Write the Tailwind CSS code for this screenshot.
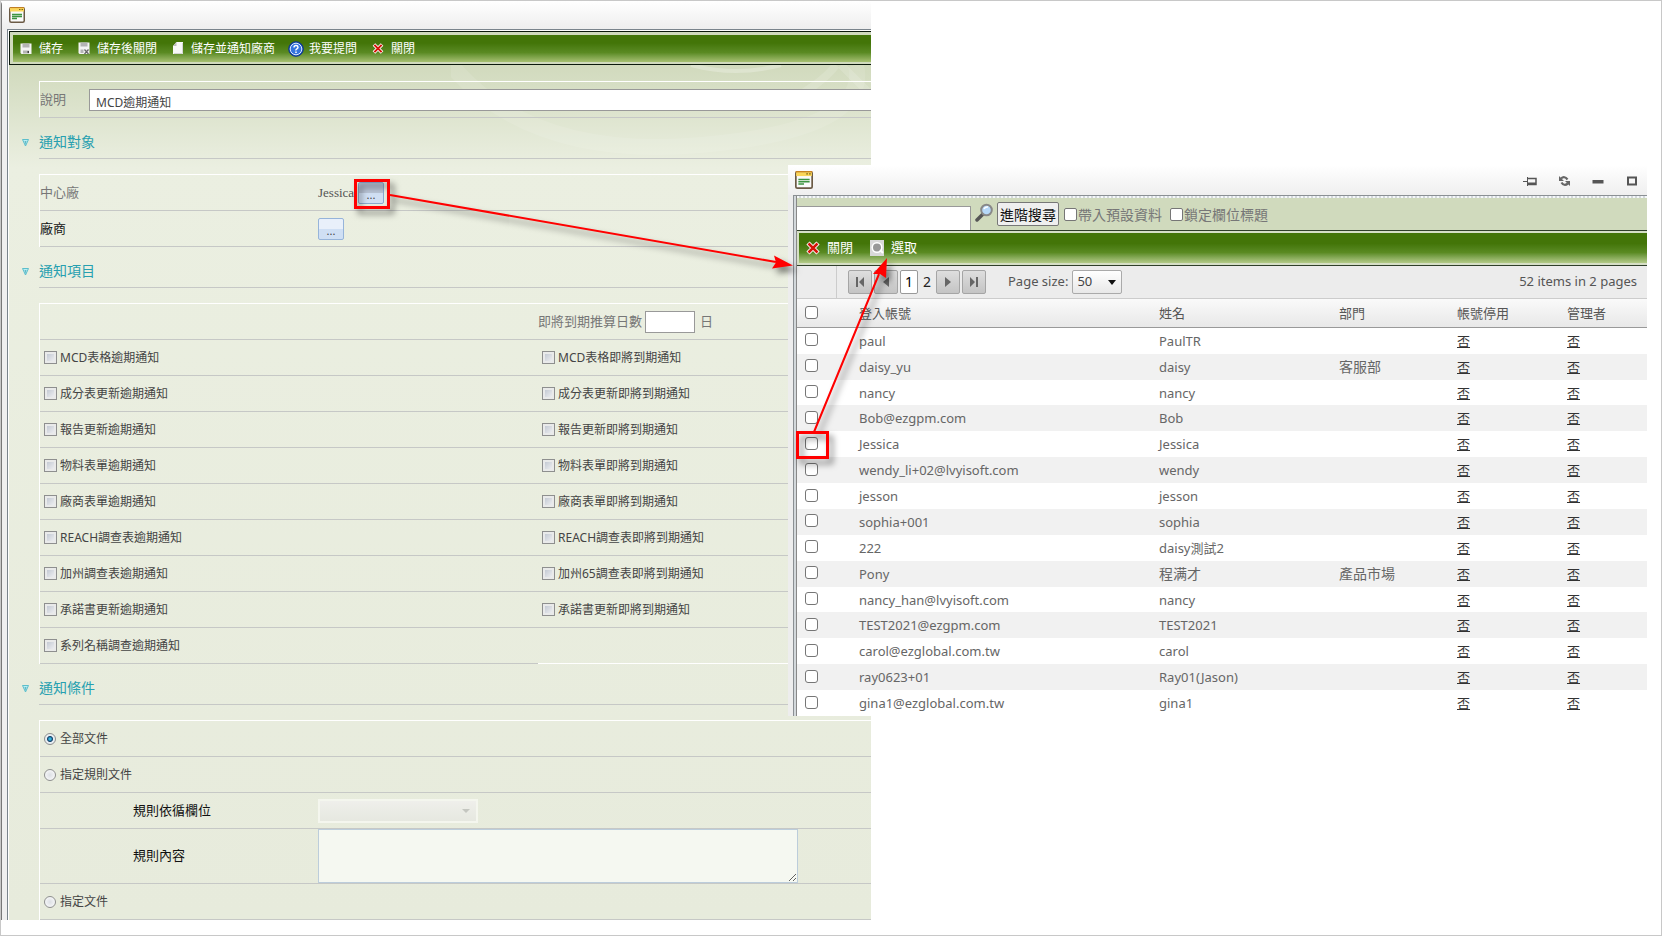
<!DOCTYPE html>
<html lang="zh-Hant">
<head>
<meta charset="utf-8">
<title>MCD逾期通知</title>
<script src="https://cdn.jsdelivr.net/npm/@tailwindcss/browser@4"></script>
</head>
<body class="bg-white">
<svg class="hidden">
  <symbol id="form" viewBox="0 0 16 16">
    <rect x=".75" y=".75" width="14.5" height="14.5" rx="1.5" fill="#fafafa" stroke="#6b5a45" stroke-width="1.5"/>
    <path d="M1 1h14v3.500H1z" fill="#fbd65a"/><path d="M.7 1.200Q.8.6 1.500.6h13q.7 0 .8.600" fill="none" stroke="#c98320"/>
    <path d="M10 2.500h1.500M12.500 2.500H14" stroke="#7d6a18"/>
    <path d="M3 7.500h10M3 9.500h10M3 11.500h5" stroke="#3d9440" stroke-width="1.300"/>
  </symbol>
  <symbol id="cross" viewBox="0 0 16 16">
    <path d="M3 3l10 10M13 3L3 13" stroke="#fff" stroke-width="4.500"/>
    <path d="M3.500 3.500l9 9M12.500 3.500l-9 9" stroke="#d41408" stroke-width="2.500"/>
  </symbol>
  <symbol id="gem" viewBox="0 0 9 9">
    <path d="M1.500 1.500h6L4.500 8z" fill="#b9eef3" stroke="#5cbecb"/><path d="M3.500 3h2L4.500 7z" fill="#2c96a8" opacity=".6"/>
  </symbol>
</svg>
<main class="relative min-h-screen overflow-hidden border border-[#c8c8c8] font-['Noto_Sans','Noto_Sans_CJK_TC',sans-serif]">

  <!-- Notification settings window -->
  <section class="flex w-[52.42%] flex-col rounded-tl border-l border-[#777] bg-[#efefef]">
    <header class="flex h-7 items-center bg-linear-to-b from-white to-[#eeeeee] pl-[7px]">
      <svg class="size-4"><use href="#form"/></svg>
    </header>
    <div class="ml-[5px] border-t border-l border-[#7a848c] bg-white pt-px pl-px">
      <nav class="border-y border-l border-[#0c1a0c] bg-[#d0dabd] pt-[3px] pb-0.5 pl-[3px]">
        <div class="flex h-[27px] items-center gap-[13px] bg-linear-to-b from-[#437508] from-30% via-[#5a8a22] via-65% to-[#a6c070] pl-[5px] text-xs text-white [&_button]:flex [&_button]:items-center [&_button]:gap-[5px] [&_svg]:size-4">
          <button type="button"><svg viewBox="0 0 16 16"><path d="M2.500 2.500h11v10.500H3.500l-1-1z" fill="#f4f4f4"/><path d="M4.500 2.500h7v4h-7zM5 9.500h6v3H5z" fill="#b4b4b4"/><path d="M9.500 10h1.500v2H9.500z" fill="#444"/></svg>儲存</button>
          <button type="button"><svg viewBox="0 0 16 16"><path d="M2.500 1.500h11V13H3.500l-1-1z" fill="#f4f4f4"/><path d="M4.500 1.500h7v4h-7zM4.500 8.500h3V12h-3z" fill="#b4b4b4"/><path d="M8.500 8.500l4 4.500M12.500 8.500l-4 4.500" stroke="#666" stroke-width="1.300"/></svg>儲存後關閉</button>
          <button type="button"><svg viewBox="0 0 16 16"><path d="M6.500 1H13v12H3V5z" fill="#f8f8f8"/><path d="M6.500 1v4H3z" fill="#bdbdbd"/><path d="M12.500 2v10.500H4" fill="none" stroke="#d5d5d5"/></svg>儲存並通知廠商</button>
          <button type="button"><svg viewBox="0 0 16 16"><circle cx="8" cy="8" r="7.300" fill="#1e55c4" stroke="#0e3585"/><circle cx="8" cy="8" r="5.800" fill="#3474df" stroke="#dfe9fb"/><path d="M6 6.500q.1-1.900 2-1.900t2 1.700q0 1-1.100 1.600T8 9.500M8 10.500v1.500" fill="none" stroke="#fff" stroke-width="1.500"/></svg>我要提問</button>
          <button type="button"><svg class="p-px pb-0.5"><use href="#cross"/></svg>關閉</button>
        </div>
      </nav>
      <form class="relative bg-linear-to-b from-[#d1dabd] via-[#ebefe1] via-12% to-[#e7ebdc] pt-4 text-xs text-[#444]">
        <svg class="absolute top-0 right-0 h-[95px] w-[420px]" viewBox="0 0 420 95" fill="none" stroke="#fff">
          <path d="M0 0Q80 95 250 80T405 0" stroke-width="16" opacity=".1"/><path d="M240 0q45 12 90 0" stroke-width="4" opacity=".25"/><path d="M330 40Q370 20 385 0M390 0l30 30" stroke-width="8" opacity=".14"/>
        </svg>
        <div class="relative ml-[30px]">
          <div class="flex h-[37px] items-center border-t border-b border-l border-t-white border-b-[#c6c8c6] border-l-white">
            <label for="memo" class="w-[49px] text-[13px] text-[#777]">說明</label>
            <input id="memo" value="MCD逾期通知" class="h-[22px] min-w-0 flex-1 border-y border-l border-[#999] bg-white px-1.5 pt-1">
          </div>

          <div class="flex h-[41px] items-center border-b border-[#c6c8c6] pt-2">
            <svg class="-ml-[18px] mr-[9px] size-[9px]"><use href="#gem"/></svg>
            <h2 class="text-sm text-[#27a0b0]">通知對象</h2>
          </div>
          <div class="mt-[15px] border-t border-l border-white text-[13px]">
            <div class="flex h-9 items-center border-b border-[#c6c8c6] text-[#777]">
              <span class="w-[278px]">中心廠</span><span class="w-10 font-['Liberation_Serif',serif] text-[#555]">Jessica</span>
              <button type="button" aria-label="選擇中心廠" class="h-[22px] w-[26px] rounded-xs border border-[#8ba9cf] bg-linear-to-b from-[#b9c4d6] from-50% to-[#d0dff3] to-50% pt-1 text-[11px] leading-4 text-[#444]">...</button>
            </div>
            <div class="flex h-9 items-center border-b border-[#c6c8c6] text-[#111]">
              <span class="w-[278px]">廠商</span>
              <button type="button" aria-label="選擇廠商" class="h-[22px] w-[26px] rounded-xs border border-[#96b4da] bg-linear-to-b from-[#e9f0fa] from-50% to-[#cfdff4] to-50% pt-1 text-[11px] leading-4 text-[#444]">...</button>
            </div>
          </div>

          <div class="flex h-[41px] items-center border-b border-[#c6c8c6] pt-2">
            <svg class="-ml-[18px] mr-[9px] size-[9px]"><use href="#gem"/></svg>
            <h2 class="text-sm text-[#27a0b0]">通知項目</h2>
          </div>
          <div class="mt-[15px] border-t border-l border-white [&_div]:flex [&_div]:h-9 [&_div]:items-center [&_div]:border-b [&_div]:border-[#c6c8c6] [&_input[type=checkbox]]:size-[13px] [&_input[type=checkbox]]:appearance-none [&_input[type=checkbox]]:border [&_input[type=checkbox]]:border-[#8e8f8f] [&_input[type=checkbox]]:bg-linear-to-br [&_input[type=checkbox]]:from-[#b9c0cc] [&_input[type=checkbox]]:to-[#f8f8f8] [&_input[type=checkbox]]:shadow-[inset_0_0_0_2px_#e9eaea] [&_label]:flex [&_label]:w-[498px] [&_label]:shrink-0 [&_label]:items-center [&_label]:gap-[3px] [&_label]:pl-1">
            <div class="text-[13px] text-[#777]">
              <span class="w-[498px] shrink-0"></span><label for="days" class="w-auto! pl-0!">即將到期推算日數</label>
              <input id="days" class="mr-[5px] ml-[3px] h-[22px] w-[50px] border border-[#999] bg-white"><span>日</span>
            </div>
            <div><label><input type="checkbox">MCD表格逾期通知</label><label><input type="checkbox">MCD表格即將到期通知</label></div>
            <div><label><input type="checkbox">成分表更新逾期通知</label><label><input type="checkbox">成分表更新即將到期通知</label></div>
            <div><label><input type="checkbox">報告更新逾期通知</label><label><input type="checkbox">報告更新即將到期通知</label></div>
            <div><label><input type="checkbox">物料表單逾期通知</label><label><input type="checkbox">物料表單即將到期通知</label></div>
            <div><label><input type="checkbox">廠商表單逾期通知</label><label><input type="checkbox">廠商表單即將到期通知</label></div>
            <div><label><input type="checkbox">REACH調查表逾期通知</label><label><input type="checkbox">REACH調查表即將到期通知</label></div>
            <div><label><input type="checkbox">加州調查表逾期通知</label><label><input type="checkbox">加州65調查表即將到期通知</label></div>
            <div><label><input type="checkbox">承諾書更新逾期通知</label><label><input type="checkbox">承諾書更新即將到期通知</label></div>
            <div class="border-b-0!"><label class="h-9 border-b border-[#c6c8c6]"><input type="checkbox">系列名稱調查逾期通知</label><span class="h-9 flex-1 border-b border-white"></span></div>
          </div>

          <div class="flex h-[41px] items-center border-b border-[#c6c8c6] pt-2">
            <svg class="-ml-[18px] mr-[9px] size-[9px]"><use href="#gem"/></svg>
            <h2 class="text-sm text-[#27a0b0]">通知條件</h2>
          </div>
          <div class="mt-[15px] border-t border-l border-white [&_input]:size-3 [&_input]:appearance-none [&_input]:rounded-full [&_input]:border [&_input]:border-[#8e8f8f] [&_input]:bg-radial [&_input]:from-[#dcdfe4] [&_input]:to-white [&_input:checked]:from-[#35b5e0] [&_input:checked]:from-15% [&_input:checked]:via-[#123f66] [&_input:checked]:via-35% [&_input:checked]:to-[#e8eef2] [&_input:checked]:to-50% [&>div]:flex [&>div]:items-center [&>div]:border-b [&>div]:border-[#c6c8c6]">
            <div class="h-9"><label class="flex items-center gap-1 pl-1"><input type="radio" name="scope" checked>全部文件</label></div>
            <div class="h-9"><label class="flex items-center gap-1 pl-1"><input type="radio" name="scope">指定規則文件</label></div>
            <div class="h-9 text-[13px] text-[#111]">
              <label for="field" class="w-[278px] pl-[93px]">規則依循欄位</label>
              <div class="relative flex items-center">
                <select id="field" disabled class="h-6 w-40 appearance-none border-2 border-[#f4f6ee] bg-linear-to-b from-[#efefeb] to-[#e6e8e0]"><option></option></select>
                <svg class="absolute right-2 size-2" viewBox="0 0 8 8"><path d="M0 2h8L4 6z" fill="#c4c6c0"/></svg>
              </div>
            </div>
            <div class="h-[55px] text-[13px] text-[#111]">
              <label for="rule" class="w-[278px] pl-[93px]">規則內容</label>
              <textarea id="rule" class="h-[54px] w-[480px] border border-[#bccddb] bg-[#f5f8f1]"></textarea>
            </div>
            <div class="h-9"><label class="flex items-center gap-1 pl-1"><input type="radio" name="scope">指定文件</label></div>
          </div>
        </div>
      </form>
    </div>
  </section>

  <!-- Account picker window -->
  <section class="absolute top-[164px] right-[14px] left-[787px] bg-[#ededed]">
    <header class="flex h-[30px] items-center bg-linear-to-b from-white to-[#efefef] pt-0.5 pr-2 pl-[7px]">
      <svg class="mr-auto mb-0.5 size-[18px]"><use href="#form"/></svg>
      <div class="flex gap-5 [&_svg]:size-3.5">
        <button type="button" aria-label="固定"><svg viewBox="0 0 14 14" fill="none" stroke="#555"><path d="M0 7.500h4" /><path d="M4.500 3v9"/><path d="M5 4.500h8v6H5" stroke-width="1.500"/><path d="M5 9.500h8" stroke-width="2"/></svg></button>
        <button type="button" aria-label="重新整理"><svg viewBox="0 0 14 14" fill="none" stroke="#666" stroke-width="2.200"><path d="M4 4.500Q7.500 1.500 10.500 5.500M11 9.500Q7 12.500 4.500 8.500"/><path d="M2 2v5h5zM13 12V7H8z" fill="#666" stroke="none"/></svg></button>
        <button type="button" aria-label="最小化"><svg viewBox="0 0 14 14"><path d="M1.500 6h11v3.500h-11z" fill="#555"/></svg></button>
        <button type="button" aria-label="最大化"><svg viewBox="0 0 14 14"><path d="M3 3.500h8v7H3z" fill="none" stroke="#555" stroke-width="2"/></svg></button>
      </div>
    </header>
    <div class="ml-[5px] border-t border-l border-[#8b9094] bg-[#d3d8db] pl-0.5">
      <div class="border-l border-[#888]">
        <div class="border-t-2 border-dotted border-[#f5f8fa]"></div>
        <div class="flex h-8 items-center bg-[#d0dabd] text-sm text-[#777]">
          <input aria-label="搜尋" class="mt-2 h-6 w-[174px] border-t border-r border-[#999] bg-white">
          <button type="button" aria-label="搜尋" class="mr-[3px] mb-1 ml-1"><svg class="size-[19px]" viewBox="0 0 19 19"><path d="M2 17l6-6" stroke="#555" stroke-width="3.500" stroke-linecap="round"/><circle cx="11.500" cy="7" r="5.300" fill="#b6d8f8" stroke="#888" stroke-width="2"/><path d="M9 6q1-2.500 4-2" fill="none" stroke="#fff" stroke-width="1.500"/></svg></button>
          <button type="button" class="flex h-6 items-center rounded-xs border border-[#777] bg-[#efefef] px-0.5 pt-0.5 text-[#111]">進階搜尋</button>
          <label class="ml-[5px] flex items-center gap-px whitespace-nowrap"><input type="checkbox" class="size-[13px] appearance-none rounded-xs border border-[#767676] bg-white"><span class="pt-0.5">帶入預設資料</span></label>
          <label class="ml-2 flex items-center gap-px whitespace-nowrap"><input type="checkbox" class="size-[13px] appearance-none rounded-xs border border-[#767676] bg-white"><span class="pt-0.5">鎖定欄位標題</span></label>
        </div>
        <nav class="border-y border-[#30402a] bg-[#d6dfc6] py-0.5 pl-0.5">
          <div class="flex h-[30px] items-center gap-4 bg-linear-to-b from-[#437508] from-35% via-[#5a8a22] via-65% to-[#b4cb88] pb-px pl-1.5 text-[13px] text-white [&_button]:flex [&_button]:items-center [&_button]:gap-1.5 [&_svg]:size-4">
            <button type="button"><svg><use href="#cross"/></svg>關閉</button>
            <button type="button"><svg viewBox="0 0 16 16"><path d="M1 0h14v16H1z" fill="#d8d8d8"/><circle cx="8" cy="7.500" r="5.500" fill="#fff"/><circle cx="8" cy="7.500" r="4" fill="#989898"/><path d="M11 10l3 3" stroke="#fff" stroke-width="2"/></svg>選取</button>
          </div>
        </nav>
        <div class="flex h-[33px] items-center border-b border-[#ccc] bg-[#ececec] pr-2.5 text-[13px] text-[#555]">
          <span class="h-full w-10 border-r border-[#ccc]"></span>
          <div class="ml-[11px] flex items-center gap-0.5 [&_button]:flex [&_button]:size-6 [&_button]:items-center [&_button]:justify-center [&_button]:rounded-xs [&_button]:border [&_button]:border-[#a5a5a5] [&_button]:bg-linear-to-b [&_button]:from-[#dedede] [&_button]:to-[#c4c4c4] [&_svg]:h-2.5 [&_svg]:w-2.5">
            <button type="button" aria-label="第一頁"><svg viewBox="0 0 10 10"><path d="M1 0h2v10H1zM9 0v10L4 5z" fill="#666"/></svg></button>
            <button type="button" aria-label="上一頁"><svg viewBox="0 0 10 10"><path d="M8 0v10L2 5z" fill="#666"/></svg></button>
            <a href="#" class="flex h-6 w-[18px] items-center justify-center rounded-xs border border-[#999] bg-white text-sm text-black">1</a>
            <a href="#" class="w-3.5 text-center text-sm text-[#222]">2</a>
            <button type="button" aria-label="下一頁"><svg viewBox="0 0 10 10"><path d="M2 0v10l6-5z" fill="#666"/></svg></button>
            <button type="button" aria-label="最後一頁"><svg viewBox="0 0 10 10"><path d="M7 0h2v10H7zM1 0v10l5-5z" fill="#666"/></svg></button>
          </div>
          <label for="size" class="mr-1 ml-[22px] whitespace-nowrap">Page size:</label>
          <div class="relative flex items-center">
            <select id="size" class="h-6 w-[50px] appearance-none rounded-xs border border-[#aaa] bg-linear-to-b from-white to-[#e8e8e8] pl-1 text-[#444]"><option>50</option></select>
            <svg class="pointer-events-none absolute right-[5px] size-2.5" viewBox="0 0 10 10"><path d="M1 3h8L5 8z" fill="#111"/></svg>
          </div>
          <span class="ml-auto whitespace-nowrap">52 items in 2 pages</span>
        </div>
        <table class="h-[417px] w-full table-fixed bg-white text-left text-[13px] leading-4 text-[#666] [&_a]:text-[#333] [&_a]:underline [&_input]:block [&_input]:size-[13px] [&_input]:appearance-none [&_input]:rounded-[3px] [&_input]:border [&_input]:border-[#767676] [&_input]:bg-white [&_td:first-child]:pb-0.5 [&_td:first-child]:pl-2 [&_th:first-child]:pl-2 [&_th]:font-normal">
          <colgroup><col class="w-[62px]"><col class="w-[300px]"><col class="w-[180px]"><col class="w-[118px]"><col class="w-[110px]"><col></colgroup>
          <thead class="bg-linear-to-b from-[#fafafa] to-[#e8e8e8]"><tr class="h-7 border-b border-[#999] text-[#555]"><th><input type="checkbox" aria-label="全選"></th><th>登入帳號</th><th>姓名</th><th>部門</th><th>帳號停用</th><th>管理者</th></tr></thead>
          <tbody class="[&_tr:nth-child(even)]:bg-[#f1f1f1]">
            <tr><td><input type="checkbox" aria-label="paul"></td><td>paul</td><td>PaulTR</td><td></td><td><a href="#">否</a></td><td><a href="#">否</a></td></tr>
            <tr><td><input type="checkbox" aria-label="daisy_yu"></td><td>daisy_yu</td><td>daisy</td><td class="text-sm leading-4">客服部</td><td><a href="#">否</a></td><td><a href="#">否</a></td></tr>
            <tr><td><input type="checkbox" aria-label="nancy"></td><td>nancy</td><td>nancy</td><td></td><td><a href="#">否</a></td><td><a href="#">否</a></td></tr>
            <tr><td><input type="checkbox" aria-label="Bob"></td><td>Bob@ezgpm.com</td><td>Bob</td><td></td><td><a href="#">否</a></td><td><a href="#">否</a></td></tr>
            <tr><td><input type="checkbox" aria-label="Jessica"></td><td>Jessica</td><td>Jessica</td><td></td><td><a href="#">否</a></td><td><a href="#">否</a></td></tr>
            <tr><td><input type="checkbox" aria-label="wendy"></td><td>wendy_li+02@lvyisoft.com</td><td>wendy</td><td></td><td><a href="#">否</a></td><td><a href="#">否</a></td></tr>
            <tr><td><input type="checkbox" aria-label="jesson"></td><td>jesson</td><td>jesson</td><td></td><td><a href="#">否</a></td><td><a href="#">否</a></td></tr>
            <tr><td><input type="checkbox" aria-label="sophia"></td><td>sophia+001</td><td>sophia</td><td></td><td><a href="#">否</a></td><td><a href="#">否</a></td></tr>
            <tr><td><input type="checkbox" aria-label="222"></td><td>222</td><td>daisy測試2</td><td></td><td><a href="#">否</a></td><td><a href="#">否</a></td></tr>
            <tr><td><input type="checkbox" aria-label="Pony"></td><td>Pony</td><td class="text-sm leading-4">程满才</td><td class="text-sm leading-4">產品市場</td><td><a href="#">否</a></td><td><a href="#">否</a></td></tr>
            <tr><td><input type="checkbox" aria-label="nancy_han"></td><td>nancy_han@lvyisoft.com</td><td>nancy</td><td></td><td><a href="#">否</a></td><td><a href="#">否</a></td></tr>
            <tr><td><input type="checkbox" aria-label="TEST2021"></td><td>TEST2021@ezgpm.com</td><td>TEST2021</td><td></td><td><a href="#">否</a></td><td><a href="#">否</a></td></tr>
            <tr><td><input type="checkbox" aria-label="carol"></td><td>carol@ezglobal.com.tw</td><td>carol</td><td></td><td><a href="#">否</a></td><td><a href="#">否</a></td></tr>
            <tr><td><input type="checkbox" aria-label="ray0623"></td><td>ray0623+01</td><td>Ray01(Jason)</td><td></td><td><a href="#">否</a></td><td><a href="#">否</a></td></tr>
            <tr><td><input type="checkbox" aria-label="gina1"></td><td>gina1@ezglobal.com.tw</td><td>gina1</td><td></td><td><a href="#">否</a></td><td><a href="#">否</a></td></tr>
          </tbody>
        </table>
      </div>
    </div>
  </section>

  <!-- Step markers: red boxes and arrows -->
  <svg class="pointer-events-none absolute top-0 left-0 h-[560px] w-[960px] drop-shadow-[4px_5px_3px_rgb(0_0_0/0.5)]" viewBox="1 1 960 560" fill="none" stroke="red">
    <path d="M355.500 180.500h33v27h-33zM797.500 432.500h30v25h-30z" stroke-width="3"/>
    <path d="M390 195l386 67M814 432l65-158" stroke-width="2"/>
    <path d="M793 265.500l-21 3 4-6-2-7zM887 258l-1 20-6-4-7 0z" fill="red" stroke="none"/>
  </svg>
</main>
</body>
</html>
